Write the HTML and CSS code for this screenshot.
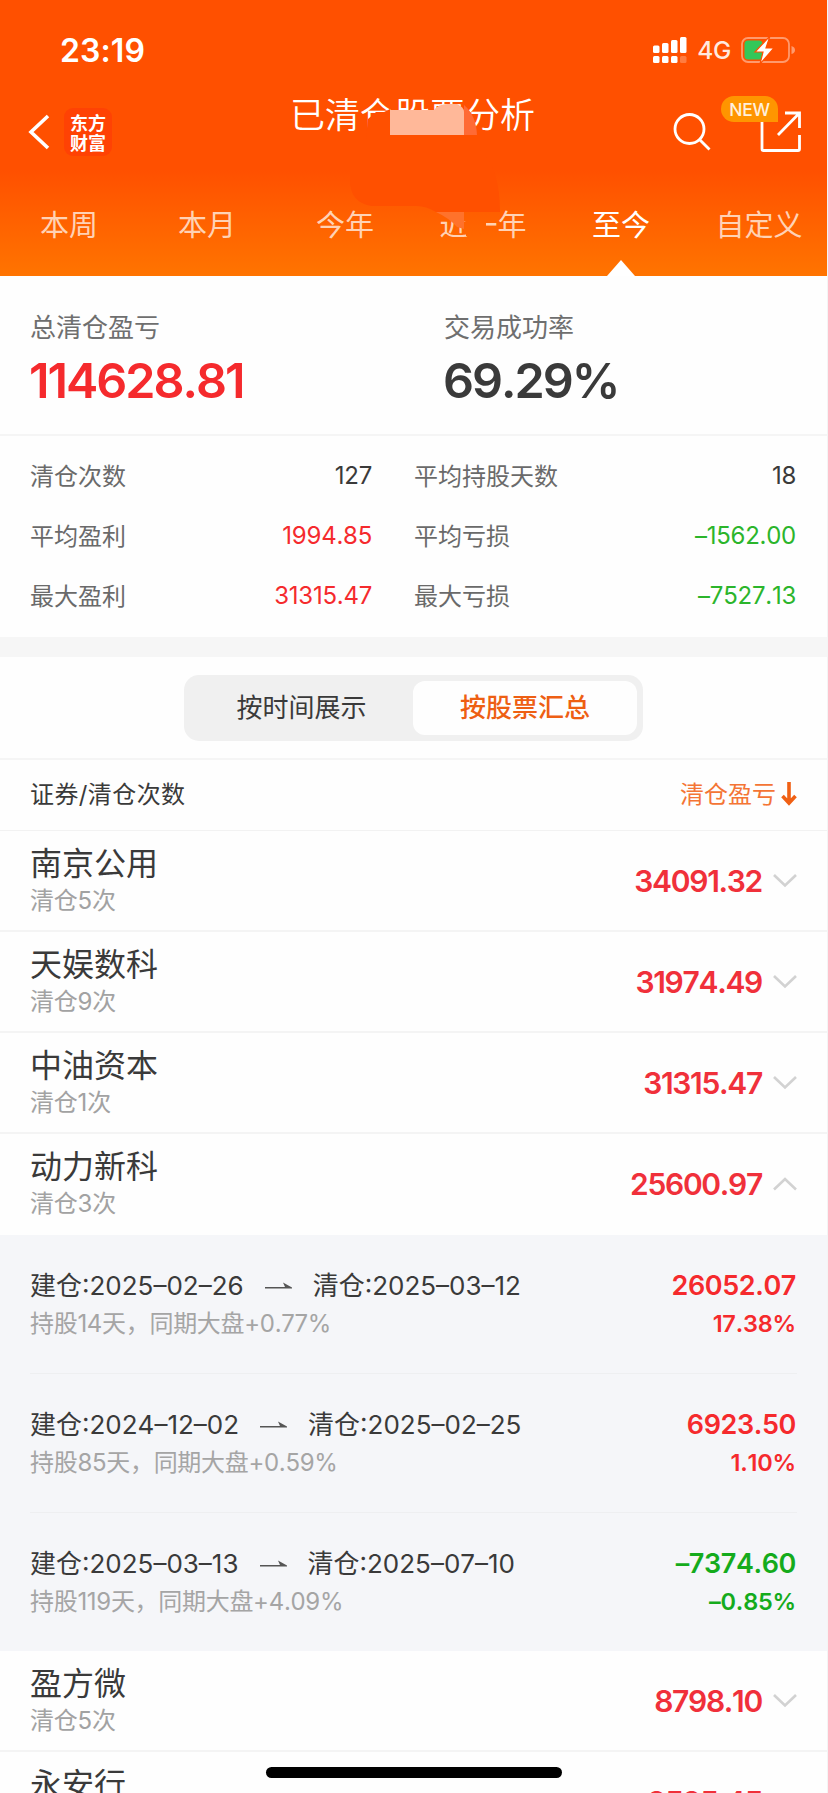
FILE: index.html
```html
<!DOCTYPE html>
<html lang="zh-CN">
<head>
<meta charset="utf-8">
<title>已清仓股票分析</title>
<link rel="stylesheet" href="styles.css">
</head>
<body>
<div class="screen">
  <header class="header">
    <div class="status">
      <span class="time">23:19</span>
      <div class="status-icons">
        <svg width="34" height="26" viewBox="0 0 34 26" fill="#fff"><rect x="0" y="8.500" width="6.500" height="7.500" rx="1.500"/><rect x="9" y="6" width="6.500" height="10" rx="1.500"/><rect x="18" y="3" width="6.500" height="13" rx="1.500"/><rect x="27" y="0" width="6.500" height="16" rx="1.500"/><rect x="0" y="19" width="6.500" height="7" rx="1.500"/><rect x="9" y="19" width="6.500" height="7" rx="1.500"/><rect x="18" y="19" width="6.500" height="7" rx="1.500"/><rect x="27" y="19" width="6.500" height="7" rx="1.500" opacity=".25"/></svg>
        <span class="net">4G</span>
        <svg class="battery" width="54" height="26" viewBox="0 0 54 26"><rect x="1" y="1" width="47" height="24" rx="6" fill="none" stroke="#ff9a6d" stroke-width="1.800"/><path d="M50.500 9q3.500 1 3.500 4t-3.500 4z" fill="#ff9a6d"/><rect x="3.500" y="3.500" width="18" height="19" rx="3.500" fill="#34c759"/><path d="M29 -1 14 15h8l-3 12 14-16h-8l4-12z" fill="#fff" stroke="#ff5000" stroke-width="1.200"/></svg>
      </div>
    </div>
    <div class="nav">
      <svg class="back" width="22" height="36" viewBox="0 0 22 36" fill="none" stroke="#fff" stroke-width="3.600"><path d="M20 2 3 18l17 16"/></svg>
      <div class="logo">东方<br>财富</div>
      <h1 class="title">已清仓股票分析</h1>
      <svg class="search" width="38" height="38" viewBox="0 0 38 38" fill="none" stroke="#fff" stroke-width="2.800"><circle cx="16.500" cy="16" r="14.500"/><path d="m26.500 26.500 10 10"/></svg>
      <div class="share">
        <svg width="42" height="42" viewBox="0 0 42 42" fill="none" stroke="#fff" stroke-width="2.800"><path d="M2 9v29q0 1.500 1.500 1.500H38q1.500 0 1.500-1.500V24M25 2h14.500V17M39 2.500 18 24"/></svg>
        <span class="new">NEW</span>
      </div>
    </div>
    <nav class="tabs">
      <span>本周</span><span>本月</span><span>今年</span><span>近一年</span><span class="on">至今</span><span>自定义</span>
    </nav>
    <svg class="smudge" width="160" height="140" viewBox="340 100 160 140">
      <defs><linearGradient id="sky" gradientUnits="userSpaceOnUse" x1="0" y1="170" x2="0" y2="276"><stop stop-color="#ff5000"/><stop offset="1" stop-color="#ff7400"/></linearGradient></defs>
      <path d="M368 119 376 112 384 112 390 109V140H366z" fill="#ff5000"/>
      <path d="M350 150H480Q500 168 500 212H436Q425 205 414 206H372Q350 203 350 180z" fill="#ff5000"/>
      <path d="M436 212h50v24h-20v-14l-17-4h-13z" fill="url(#sky)"/>
      <path d="M436 212h28v17l-7-2q-8-9-21-15z" fill="#ff722b"/>
      <path d="M464 105q12 10 13 30h-13z" fill="#ff6a35"/>
      <path d="M390 110h44q4-6 14-6h9q7 3 7 8v23h-74z" fill="#ffb899"/>
    </svg>
  </header>

  <section class="totals">
    <div class="total"><span class="total-label">总清仓盈亏</span><b class="total-value red">114628.81</b></div>
    <div class="total"><span class="total-label">交易成功率</span><b class="total-value rate">69.29%</b></div>
  </section>

  <section class="stats">
    <div><span>清仓次数</span><em>127</em></div><div><span>平均持股天数</span><em>18</em></div>
    <div><span>平均盈利</span><em class="red">1994.85</em></div><div><span>平均亏损</span><em class="green">–1562.00</em></div>
    <div><span>最大盈利</span><em class="red">31315.47</em></div><div><span>最大亏损</span><em class="green">–7527.13</em></div>
  </section>

  <section class="switch-bar">
    <div class="switch"><span>按时间展示</span><span class="active">按股票汇总</span></div>
  </section>

  <div class="list-head"><span class="head-name">证券/清仓次数</span><span class="sort"><span>清仓盈亏</span><svg width="16" height="24" viewBox="0 0 16 24" fill="none" stroke="#f06014" stroke-width="3.600"><path d="M8 0v21M1.500 14 8 21l6.500-7"/></svg></span></div>

  <div class="row"><div class="stock"><span class="name">南京公用</span><span class="count">清仓5次</span></div><b class="amount">34091.32</b><svg class="chev" viewBox="0 0 24 14"><path d="M1 1 12 11.500 23 1"/></svg></div>
  <div class="row"><div class="stock"><span class="name">天娱数科</span><span class="count">清仓9次</span></div><b class="amount">31974.49</b><svg class="chev" viewBox="0 0 24 14"><path d="M1 1 12 11.500 23 1"/></svg></div>
  <div class="row"><div class="stock"><span class="name">中油资本</span><span class="count">清仓1次</span></div><b class="amount">31315.47</b><svg class="chev" viewBox="0 0 24 14"><path d="M1 1 12 11.500 23 1"/></svg></div>
  <div class="row open"><div class="stock"><span class="name">动力新科</span><span class="count">清仓3次</span></div><b class="amount">25600.97</b><svg class="chev" viewBox="0 0 24 14"><path d="M1 12.500 12 2 23 12.500"/></svg></div>

  <div class="details">
    <div class="trade">
      <div class="period"><div class="dates"><span>建仓:2025–02–26</span><svg class="arrow" viewBox="0 0 27 8"><path d="M0 5h20l-2-4.500L27 5.500V6.500H0z"/></svg><span>清仓:2025–03–12</span></div><span class="note">持股14天，同期大盘+0.77%</span></div>
      <div class="gain red"><b>26052.07</b><b class="pct">17.38%</b></div>
    </div>
    <div class="trade">
      <div class="period"><div class="dates"><span>建仓:2024–12–02</span><svg class="arrow" viewBox="0 0 27 8"><path d="M0 5h20l-2-4.500L27 5.500V6.500H0z"/></svg><span>清仓:2025–02–25</span></div><span class="note">持股85天，同期大盘+0.59%</span></div>
      <div class="gain red"><b>6923.50</b><b class="pct">1.10%</b></div>
    </div>
    <div class="trade">
      <div class="period"><div class="dates"><span>建仓:2025–03–13</span><svg class="arrow" viewBox="0 0 27 8"><path d="M0 5h20l-2-4.500L27 5.500V6.500H0z"/></svg><span>清仓:2025–07–10</span></div><span class="note">持股119天，同期大盘+4.09%</span></div>
      <div class="gain loss"><b>–7374.60</b><b class="pct">–0.85%</b></div>
    </div>
  </div>

  <div class="row"><div class="stock"><span class="name">盈方微</span><span class="count">清仓5次</span></div><b class="amount">8798.10</b><svg class="chev" viewBox="0 0 24 14"><path d="M1 1 12 11.500 23 1"/></svg></div>
  <div class="row"><div class="stock"><span class="name">永安行</span><span class="count">清仓4次</span></div><b class="amount">8525.45</b><svg class="chev" viewBox="0 0 24 14"><path d="M1 1 12 11.500 23 1"/></svg></div>
  <div class="home-bar"></div>
</div>
</body>
</html>
```

FILE: styles.css
```css
* { box-sizing: border-box; }
body { margin: 0; background: #fefefe; font-family: Inter, "Noto Sans CJK SC", sans-serif; color: #3a3a3a; font-kerning: none; }
svg { display: block; flex: none; }
em { font-style: normal; }
.screen { position: relative; width: 828px; height: 1793px; overflow: hidden; border-right: 1px solid #f4f4f4; }
.red { color: #f52a2d; }
.green { color: #2bb52b; }

.header { position: relative; height: 276px; background: linear-gradient(#ff5000 0, #ff5000 170px, #ff7400 276px); color: #fff; }
.status { display: flex; justify-content: space-between; height: 98px; padding: 2px 32px 0 60px; align-items: center; }
.time { font-size: 32px; font-weight: 600; letter-spacing: .1px; }
.status-icons { display: flex; align-items: center; gap: 10px; }
.net { font-size: 24.5px; font-weight: 500; letter-spacing: -.3px; color: #ffe9df; }
.nav { display: flex; align-items: center; height: 68px; padding: 0 25px 0 28px; }
.logo { width: 48px; height: 48px; margin-left: 14px; padding-top: 4px; border-radius: 9px; background: #ff4204; font: 700 18px/20px "Noto Sans CJK SC", sans-serif; text-align: center; }
.title { flex: 1; margin: -34px 0 0 10px; padding-left: 168px; font-size: 35px; line-height: 48px; font-weight: 350; }
.search { margin-right: 49px; }
.share { position: relative; }
.new { position: absolute; left: -39px; top: -15px; width: 57px; height: 26px; border-radius: 13px 13px 0 13px; background: #ff9500; font-size: 17.5px; line-height: 27px; font-weight: 500; text-align: center; letter-spacing: -.2px; color: #fff0dc; }
.tabs { display: grid; grid-template-columns: repeat(6, 138px); height: 110px; }
.tabs span { position: relative; height: 110px; padding-top: 30px; font-size: 29px; line-height: 60px; text-align: center; color: #ffd2b5; }
.tabs .on { color: #fff; }
.tabs .on::after { content: ""; position: absolute; left: 55px; bottom: 0; border: 14px solid transparent; border-top: 0; border-bottom: 16px solid #fff; }
.smudge { position: absolute; left: 340px; top: 100px; }

.totals { display: grid; grid-template-columns: 414px 1fr; height: 160px; border-bottom: 2px solid #f5f5f5; }
.total { display: flex; flex-direction: column; padding: 33px 0 0 30px; }
.total-label { font-size: 26px; line-height: 38px; color: #6f6f6f; }
.total-value { margin: 5px 0 0 -1px; font-size: 48.5px; line-height: 58px; font-weight: 600; letter-spacing: -2px; }
.stats { display: grid; grid-template-columns: 342px 382px; grid-auto-rows: 60px; column-gap: 42px; height: 221px; padding: 8px 30px 0; border-bottom: 20px solid #f6f6f6; }
.stats div { display: flex; justify-content: space-between; align-items: center; font-size: 24px; }
.stats em { padding-top: 2px; letter-spacing: -.25px; }
.stats span { color: #6a6a6a; }

.switch-bar { height: 103px; padding: 18px 0 0 184px; border-bottom: 2px solid #f5f5f5; }
.switch { display: grid; grid-template-columns: 1fr 224px; width: 459px; height: 66px; padding: 6px; border-radius: 15px; background: #f0f0f0; font-size: 26px; line-height: 54px; text-align: center; }
.switch .active { border-radius: 12px; background: #fefefe; color: #ee5f13; font-weight: 500; }
.list-head { display: flex; justify-content: space-between; height: 71px; padding: 0 30px; align-items: center; font-size: 24px; border-bottom: 1px solid #f2f2f2; }
.head-name { padding-bottom: 5px; letter-spacing: .4px; }
.sort { display: flex; align-items: center; gap: 5px; color: #f47535; }
.sort span { padding-bottom: 5px; }
.sort svg { margin-bottom: 2px; }

.row { display: flex; align-items: center; height: 101px; padding: 0 30px; border-bottom: 2px solid #f4f4f4; }
.row.open { border-color: #fefefe; }
.stock { display: flex; flex-direction: column; flex: 1; padding-bottom: 2px; }
.name { font-size: 32px; line-height: 42px; }
.count { font-size: 24px; line-height: 32px; color: #a2a2a2; letter-spacing: -.2px; }
.amount { font-size: 30px; font-weight: 600; letter-spacing: -1.3px; color: #f0303a; }
.chev { width: 24px; height: 14px; margin-left: 11px; fill: none; stroke: #d2d2d2; stroke-width: 2.6; }

.details { padding: 0 30px; height: 416px; background: #f5f6f9; }
.trade { display: flex; justify-content: space-between; height: 139px; padding-top: 31px; border-bottom: 1px solid #eeeff1; }
.trade:last-child { border: 0; }
.period, .gain { display: flex; flex-direction: column; }
.dates { display: flex; align-items: center; font-size: 26px; line-height: 40px; }
.arrow { width: 27px; height: 8px; margin: 0 21px; fill: #555; }
.note { font-size: 24px; line-height: 36px; color: #a5a5a5; letter-spacing: -.3px; }
.gain { text-align: right; align-items: flex-end; padding-right: 1px; }
.gain b { font-size: 27px; line-height: 40px; font-weight: 600; letter-spacing: -.4px; }
.gain .pct { font-size: 23.5px; line-height: 36px; letter-spacing: -.2px; }
.loss { color: #14ab1c; }
.home-bar { position: absolute; left: 266px; top: 1767px; width: 296px; height: 11px; border-radius: 6px; background: #000; }
```
